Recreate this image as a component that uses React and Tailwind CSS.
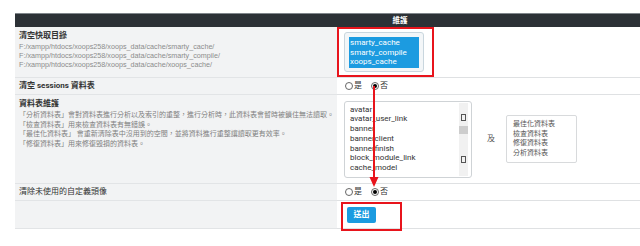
import React from 'react';

const cjk = { fontFamily: 'Roboto, "Noto Sans CJK TC", sans-serif' };

const paths = [
  'F:/xampp/htdocs/xoops258/xoops_data/cache/smarty_cache/',
  'F:/xampp/htdocs/xoops258/xoops_data/cache/smarty_compile/',
  'F:/xampp/htdocs/xoops258/xoops_data/cache/xoops_cache/',
];

const notes = [
  '「分析資料表」會對資料表進行分析以及索引的重整，進行分析時，此資料表會暫時被鎖住無法讀取。',
  '「檢查資料表」用來檢查資料表有無錯誤。',
  '「最佳化資料表」 會重新清除表中沒用到的空間，並將資料進行重整讓讀取更有效率。',
  '「修復資料表」用來修復毀損的資料表。',
];

const tables = ['avatar', 'avatar_user_link', 'banner', 'bannerclient', 'bannerfinish', 'block_module_link', 'cache_model'];
const ops = ['最佳化資料表', '檢查資料表', '修復資料表', '分析資料表'];

const Radio = ({ checked, label }) => (
  <label className="flex items-center gap-[1px] text-[8px] text-[#333]">
    <span className="w-[8px] h-[8px] rounded-full border border-[#666] bg-white flex items-center justify-center">
      {checked && <span className="w-[4px] h-[4px] rounded-full bg-black" />}
    </span>
    <span>{label}</span>
  </label>
);

const YesNo = () => (
  <div className="flex items-center gap-[9px] pl-[8px] h-full">
    <Radio label="是" />
    <Radio checked label="否" />
  </div>
);

const Row = ({ left, right, h }) => (
  <>
    <div className={`${h} bg-[#f2f3f4] border-b border-[#e2e4e6] pl-[4px]`}>{left}</div>
    <div className={`${h} bg-white border-b border-[#dfe1e3]`}>{right}</div>
  </>
);

export default function App() {
  return (
    <div className="relative w-[640px] h-[246px] bg-white overflow-hidden flex" style={cjk}>
      <div className="w-[3px] h-full bg-[#e2e7eb]" />

      <div className="ml-[15px] pt-[13px]">
        <div className="w-[770px] grid grid-cols-[322px_1fr]">
          {/* Header */}
          <div className="col-span-2 h-[14px] bg-[#2c3136] border-t border-[#80868b] flex items-center justify-center">
            <span className="text-white text-[7.5px] font-bold leading-none">維護</span>
          </div>

          {/* Cache folders */}
          <Row
            h="h-[51px]"
            left={
              <div className="pt-[4px]">
                <div className="text-[8px] leading-[9px] font-bold text-[#333]">清空快取目錄</div>
                <div className="mt-[2px] text-[7.2px] leading-[9px] text-[#8c8c8c]" style={{ fontFamily: '"Liberation Sans", Arial, sans-serif' }}>
                  {paths.map((p) => (
                    <div key={p}>{p}</div>
                  ))}
                </div>
              </div>
            }
            right={
              <div className="pl-[7px] pt-[5px]">
                <div className="w-[80px] h-[40px] border border-[#c9d6de] rounded-[3px] bg-[#f3f6f8] p-[4px]">
                  <div className="bg-[#1c9be0] text-white text-[8px] leading-[9.5px] py-[1px] pl-[1px]">
                    <div>smarty_cache</div>
                    <div>smarty_compile</div>
                    <div>xoops_cache</div>
                  </div>
                </div>
              </div>
            }
          />

          {/* Sessions */}
          <Row
            h="h-[17px]"
            left={
              <div className="h-full flex items-center text-[8px] font-bold text-[#333]">清空 sessions 資料表</div>
            }
            right={<YesNo />}
          />

          {/* Table maintenance */}
          <Row
            h="h-[89px]"
            left={
              <div className="pt-[4px]">
                <div className="text-[8px] leading-[9px] font-bold text-[#333]">資料表維護</div>
                <div className="mt-[3px] text-[7px] leading-[9.6px] text-[#808080]">
                  {notes.map((n) => (
                    <div key={n} className="whitespace-nowrap">{n}</div>
                  ))}
                </div>
              </div>
            }
            right={
              <div className="h-full flex items-center pl-[7px]">
                <div className="w-[128px] h-[77px] border border-[#cfd3d6] rounded-[3px] bg-white flex">
                  <div className="flex-1 pl-[5px] pt-[3px] text-[8px] leading-[9.8px] text-[#333] overflow-hidden">
                    {tables.map((t) => (
                      <div key={t}>{t}</div>
                    ))}
                  </div>
                  <div className="w-[9px] mr-[3px] my-[1px] bg-[#f1f1f1] flex flex-col items-center">
                    <div className="mt-[11px] w-[5px] h-[7px] border border-[#555]" />
                    <div className="mt-[5px] w-[9px] h-[8px] bg-[#cdcdcd]" />
                    <div className="mt-[22px] w-[5px] h-[7px] border border-[#555]" />
                  </div>
                </div>
                <span className="ml-[15px] text-[8px] text-[#555]">及</span>
                <div className="ml-[11px] w-[71px] h-[48px] border border-[#d8dadc] rounded-[2px] bg-white pl-[6px] pt-[4px] text-[7px] leading-[9.7px] text-[#555]">
                  {ops.map((o) => (
                    <div key={o}>{o}</div>
                  ))}
                </div>
              </div>
            }
          />

          {/* Unused avatars */}
          <Row
            h="h-[17px]"
            left={
              <div className="h-full flex items-center text-[8px] text-[#333]">清除未使用的自定義頭像</div>
            }
            right={<YesNo />}
          />

          {/* Submit */}
          <Row
            h="h-[28px]"
            left={null}
            right={
              <div className="pl-[10px] pt-[6px]">
                <button className="w-[29px] h-[16px] bg-[#1b9be0] text-white text-[8px] font-bold rounded-[2px] flex items-center justify-center">
                  送出
                </button>
              </div>
            }
          />
        </div>
      </div>

      {/* Annotations */}
      <div className="absolute left-[337px] top-[27px] w-[97px] h-[50px] border-[2.5px] border-[#e8141c]" />
      <div className="absolute left-[341px] top-[202px] w-[61px] h-[29px] border-2 border-[#e8141c]" />
      <svg className="absolute left-[368px] top-[86px]" width="12" height="102" viewBox="0 0 12 102">
        <line x1="6" y1="0" x2="6" y2="92" stroke="#e8141c" strokeWidth="2" />
        <polygon points="1.5,91 10.5,91 6,101" fill="#e8141c" />
      </svg>
    </div>
  );
}
